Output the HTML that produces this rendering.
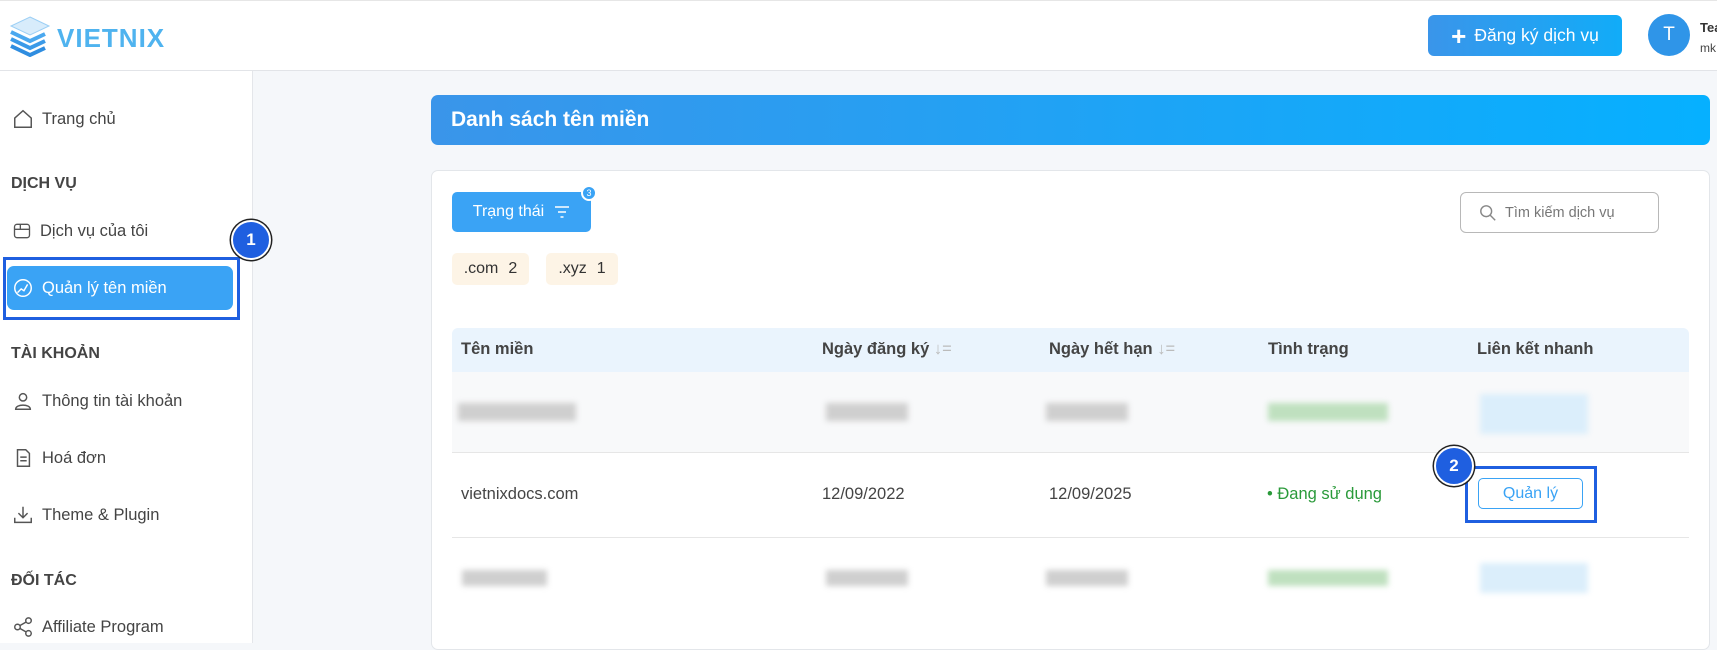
<!DOCTYPE html>
<html><head><meta charset="utf-8"><style>
*{margin:0;padding:0;box-sizing:border-box}
body{width:1717px;height:643px;overflow:hidden;background:#f5f7fa;font-family:"Liberation Sans",sans-serif;color:#333;position:relative}
.a{position:absolute}
.hdr{left:0;top:0;width:1717px;height:71px;background:#fff;border-bottom:1px solid #e2e4e8;border-top:1px solid #e6e6e6}
.side{left:0;top:71px;width:253px;height:572px;background:#fff;border-right:1px solid #e4e6ea}
.item{left:12px;font-size:16.5px;color:#444;display:flex;align-items:center;gap:8px}
.sec{left:11px;font-size:16px;font-weight:bold;color:#444}
.blur{filter:blur(3px);background:#cfcfcf}
.th{font-size:16.5px;font-weight:bold;color:#444;top:340px}
.td{font-size:16.5px;color:#444;top:485px}
.badge{border-radius:50%;background:#1f5fe0;color:#fff;font-weight:bold;font-size:17px;display:flex;align-items:center;justify-content:center;border:2px solid #fff;box-shadow:0 0 0 1.5px #222}
</style></head><body>
<div class="a hdr"></div>
<svg class="a" style="left:9px;top:15px" width="42" height="42" viewBox="0 0 42 42"><path d="M21 2 L40 11 L21 20 L2 11Z" fill="#d8ecfb" stroke="#9ccff5"/><path d="M2 17 L21 26 L36 19" fill="none" stroke="#4aa8ef" stroke-width="4"/><path d="M2 24 L21 33 L36 26" fill="none" stroke="#3b9ae8" stroke-width="4"/><path d="M2 31 L21 40 L36 33" fill="none" stroke="#2f8de0" stroke-width="4"/></svg>
<div class="a" style="left:57px;top:23px;font-size:26px;font-weight:bold;color:#4fb3ef;letter-spacing:1px">VIETNIX</div>
<div class="a" style="left:1428px;top:15px;width:194px;height:41px;border-radius:6px;background:linear-gradient(90deg,#3a95ea,#11acf8);color:#fff;font-size:17.5px;display:flex;align-items:center;justify-content:center;gap:8px"><span style="font-size:26px;font-weight:bold;line-height:1">+</span>Đăng ký dịch vụ</div>
<div class="a" style="left:1648px;top:14px;width:42px;height:42px;border-radius:50%;background:#2f95e8;color:#fff;font-size:19px;display:flex;align-items:center;justify-content:center">T</div>
<div class="a" style="left:1700px;top:20px;font-size:13px;font-weight:bold;color:#333">Tea</div>
<div class="a" style="left:1700px;top:41px;font-size:12px;color:#444">mk</div>

<div class="a side"></div>
<div class="a item" style="top:108px"><svg width="22" height="22" viewBox="0 0 24 24" fill="none" stroke="#555" stroke-width="1.6"><path d="M3 11 L12 3 L21 11 V21 H3Z"/></svg>Trang chủ</div>
<div class="a sec" style="top:175px">DỊCH VỤ</div>
<div class="a item" style="top:221px"><svg width="20" height="20" viewBox="0 0 24 24" fill="none" stroke="#555" stroke-width="1.6"><rect x="3" y="4" width="18" height="16" rx="3"/><path d="M3 10H21M10 4V10"/></svg>Dịch vụ của tôi</div>
<div class="a" style="left:3px;top:257px;width:237px;height:63px;border:3.5px solid #1f5fe0"></div>
<div class="a" style="left:7px;top:266px;width:226px;height:44px;border-radius:7px;background:#3aa3f5"></div>
<div class="a item" style="top:277px;color:#fff"><svg width="22" height="22" viewBox="0 0 24 24" fill="none" stroke="#fff" stroke-width="1.6"><circle cx="12" cy="12" r="9"/><path d="M6 17 L10 13 L13 15 L17 8"/></svg>Quản lý tên miền</div>
<div class="a badge" style="left:231px;top:220px;width:40px;height:40px">1</div>
<div class="a sec" style="top:345px">TÀI KHOẢN</div>
<div class="a item" style="top:390px"><svg width="22" height="22" viewBox="0 0 24 24" fill="none" stroke="#555" stroke-width="1.6"><circle cx="12" cy="8" r="4"/><path d="M4 21 C4 15 20 15 20 21Z"/></svg>Thông tin tài khoản</div>
<div class="a item" style="top:447px"><svg width="22" height="22" viewBox="0 0 24 24" fill="none" stroke="#555" stroke-width="1.6"><path d="M6 3H15L19 7V21H6Z M9 11H16M9 15H16"/></svg>Hoá đơn</div>
<div class="a item" style="top:504px"><svg width="22" height="22" viewBox="0 0 24 24" fill="none" stroke="#555" stroke-width="1.6"><path d="M3 15V20H21V15M12 3V15M7 10L12 15L17 10"/></svg>Theme &amp; Plugin</div>
<div class="a sec" style="top:572px">ĐỐI TÁC</div>
<div class="a item" style="top:616px"><svg width="22" height="22" viewBox="0 0 24 24" fill="none" stroke="#555" stroke-width="1.6"><circle cx="6" cy="12" r="3"/><circle cx="18" cy="5" r="3"/><circle cx="18" cy="19" r="3"/><path d="M8.5 10.5L15.5 6.5M8.5 13.5L15.5 17.5"/></svg>Affiliate Program</div>

<div class="a" style="left:431px;top:95px;width:1279px;height:50px;border-radius:7px;background:linear-gradient(90deg,#3a95ea,#06b0ff)"></div>
<div class="a" style="left:451px;top:108px;font-size:21px;font-weight:bold;color:#fff">Danh sách tên miền</div>
<div class="a" style="left:431px;top:170px;width:1279px;height:480px;border-radius:7px;background:#fff;border:1px solid #e3e6ea"></div>
<div class="a" style="left:452px;top:192px;width:139px;height:40px;border-radius:5px;background:#3aa3f5;color:#fff;font-size:16px;display:flex;align-items:center;justify-content:center;gap:10px">Trạng thái <svg width="16" height="14" viewBox="0 0 16 14" stroke="#fff" stroke-width="1.6"><path d="M1 2H15M4 7H12M6.5 12H9.5"/></svg></div>
<div class="a" style="left:581px;top:185px;width:16px;height:16px;border-radius:50%;background:#3aa3f5;border:2px solid #fff;color:#fff;font-size:9px;display:flex;align-items:center;justify-content:center">3</div>
<div class="a" style="left:452px;top:253px;width:77px;height:32px;border-radius:5px;background:#fdf4e6;font-size:16px;display:flex;align-items:center;justify-content:center;gap:10px">.com <span>2</span></div>
<div class="a" style="left:546px;top:253px;width:72px;height:32px;border-radius:5px;background:#fdf4e6;font-size:16px;display:flex;align-items:center;justify-content:center;gap:10px">.xyz <span>1</span></div>
<div class="a" style="left:1460px;top:192px;width:199px;height:41px;border-radius:6px;border:1px solid #b8b8b8;display:flex;align-items:center;padding-left:18px;gap:8px;font-size:14.5px;color:#777"><svg width="18" height="18" viewBox="0 0 20 20" fill="none" stroke="#888" stroke-width="1.6"><circle cx="8" cy="8" r="6"/><path d="M12.5 12.5L18 18"/></svg>Tìm kiếm dịch vụ</div>

<div class="a" style="left:452px;top:328px;width:1237px;height:44px;background:#eaf4fd;border-radius:6px 6px 0 0"></div>
<div class="a th" style="left:461px">Tên miền</div>
<div class="a th" style="left:822px">Ngày đăng ký <span style="color:#bbb;font-weight:normal">↓=</span></div>
<div class="a th" style="left:1049px">Ngày hết hạn <span style="color:#bbb;font-weight:normal">↓=</span></div>
<div class="a th" style="left:1268px">Tình trạng</div>
<div class="a th" style="left:1477px">Liên kết nhanh</div>
<div class="a" style="left:452px;top:372px;width:1237px;height:81px;background:#f8f9fa;border-bottom:1px solid #e6e6e6"></div>
<div class="a blur" style="left:458px;top:403px;width:118px;height:18px"></div>
<div class="a blur" style="left:826px;top:403px;width:82px;height:18px"></div>
<div class="a blur" style="left:1046px;top:403px;width:82px;height:18px"></div>
<div class="a blur" style="left:1268px;top:403px;width:120px;height:18px;background:#bfe0bf"></div>
<div class="a blur" style="left:1480px;top:394px;width:108px;height:40px;background:#dbeefb"></div>
<div class="a" style="left:452px;top:537px;width:1237px;height:1px;background:#e6e6e6"></div>
<div class="a td" style="left:461px">vietnixdocs.com</div>
<div class="a td" style="left:822px">12/09/2022</div>
<div class="a td" style="left:1049px">12/09/2025</div>
<div class="a td" style="left:1267px;color:#2a9a3a">• Đang sử dụng</div>
<div class="a" style="left:1465px;top:466px;width:132px;height:57px;border:3.5px solid #1f5fe0"></div>
<div class="a" style="left:1478px;top:478px;width:105px;height:31px;border:1px solid #3aa3f5;border-radius:5px;color:#3aa3f5;font-size:16px;display:flex;align-items:center;justify-content:center">Quản lý</div>
<div class="a badge" style="left:1434px;top:446px;width:40px;height:40px">2</div>
<div class="a blur" style="left:462px;top:570px;width:85px;height:16px"></div>
<div class="a blur" style="left:826px;top:570px;width:82px;height:16px"></div>
<div class="a blur" style="left:1046px;top:570px;width:82px;height:16px"></div>
<div class="a blur" style="left:1268px;top:570px;width:120px;height:16px;background:#bfe0bf"></div>
<div class="a blur" style="left:1480px;top:563px;width:108px;height:30px;background:#dbeefb"></div>
</body></html>
